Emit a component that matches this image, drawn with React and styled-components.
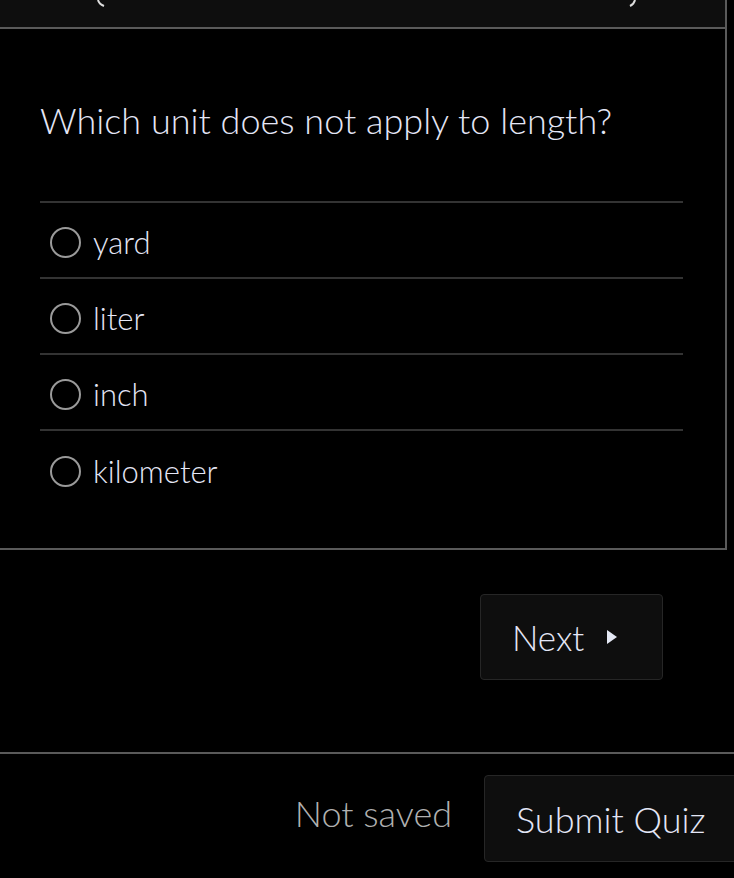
import React from "react"
import styled, { createGlobalStyle } from "styled-components"

const GlobalStyle = createGlobalStyle`
  html, body {
    margin: 0;
    padding: 0;
    background: #000;
    font-family: Lato, "Open Sans", sans-serif;
    overflow: hidden;
  }
`

const Page = styled.div`
  width: 734px;
  height: 878px;
  background: #000;
  color: #e2e4f4;
  display: flex;
  flex-direction: column;
`

const Panel = styled.div`
  width: 727px;
  height: 550px;
  border-right: 2px solid #5a5a5a;
  border-bottom: 2px solid #5a5a5a;
  box-sizing: border-box;
  display: flex;
  flex-direction: column;
`

const Header = styled.div`
  height: 29px;
  background: #0e0e0e;
  border-bottom: 2px solid #5a5a5a;
  box-sizing: border-box;
  display: flex;
  align-items: flex-start;
  justify-content: space-between;
  padding: 0 88px 0 97px;
`

// only the lower tips of the header controls are visible at the top edge
const HeaderTip = styled.svg`
  display: block;
`

const Body = styled.div`
  padding: 0 42px 0 40px;
  display: flex;
  flex-direction: column;
`

const Question = styled.h1`
  margin: 66px 0 0;
  height: 106px;
  font-size: 36px;
  font-weight: 300;
  line-height: 50px;
  border-bottom: 2px solid #333;
  color: #e4e6f6;
`

const Option = styled.label`
  display: flex;
  align-items: center;
  gap: 12px;
  height: 76px;
  padding: 4px 0 0 10px;
  box-sizing: border-box;
  border-bottom: ${p => (p.last ? "none" : "2px solid #333")};
  font-size: 31px;
  font-weight: 300;
  color: #e4e6f6;
  cursor: pointer;
`

const Radio = styled.span`
  width: 27px;
  height: 27px;
  border: 2.5px solid #9a9a9a;
  border-radius: 50%;
  flex-shrink: 0;
`

const NextRow = styled.div`
  display: flex;
  justify-content: flex-end;
  padding: 44px 71px 0 0;
  height: 204px;
  box-sizing: border-box;
  border-bottom: 2px solid #5a5a5a;
`

const Button = styled.button`
  display: flex;
  align-items: center;
  gap: 22px;
  background: #0e0e0e;
  border: 1px solid #262626;
  border-radius: 4px;
  color: #e4e6f6;
  font-family: inherit;
  font-weight: 300;
  box-sizing: border-box;
`

const NextButton = styled(Button)`
  width: 183px;
  height: 86px;
  padding: 0 0 0 31px;
  font-size: 35px;
`

const Footer = styled.div`
  display: flex;
  align-items: center;
  justify-content: flex-end;
  gap: 32px;
  padding-top: 21px;
  margin-right: -20px;
`

const Status = styled.span`
  font-size: 36px;
  font-weight: 300;
  color: #b0b0b0;
  margin-top: -12px;
`

const SubmitButton = styled(Button)`
  width: 270px;
  height: 87px;
  padding: 0 0 0 31px;
  font-size: 36px;
`

const options = ["yard", "liter", "inch", "kilometer"]

const App = () => (
  <>
    <GlobalStyle />
    <Page>
      <Panel>
        <Header>
          <HeaderTip width="8" height="7" viewBox="0 0 8 7">
            <path d="M1 0 Q2 4 7 6" stroke="#ddd" strokeWidth="2" fill="none" />
          </HeaderTip>
          <HeaderTip width="8" height="7" viewBox="0 0 8 7">
            <path d="M6 0 Q5 4 1 6" stroke="#ddd" strokeWidth="2" fill="none" />
          </HeaderTip>
        </Header>
        <Body>
          <Question>Which unit does not apply to length?</Question>
          {options.map((o, i) => (
            <Option key={o} last={i === options.length - 1}>
              <Radio />
              {o}
            </Option>
          ))}
        </Body>
      </Panel>
      <NextRow>
        <NextButton>
          Next
          <svg width="12" height="16" viewBox="0 0 12 16">
            <path d="M1 1 L11 8 L1 15 Z" fill="#e4e8f4" />
          </svg>
        </NextButton>
      </NextRow>
      <Footer>
        <Status>Not saved</Status>
        <SubmitButton>Submit Quiz</SubmitButton>
      </Footer>
    </Page>
  </>
)

export default App
